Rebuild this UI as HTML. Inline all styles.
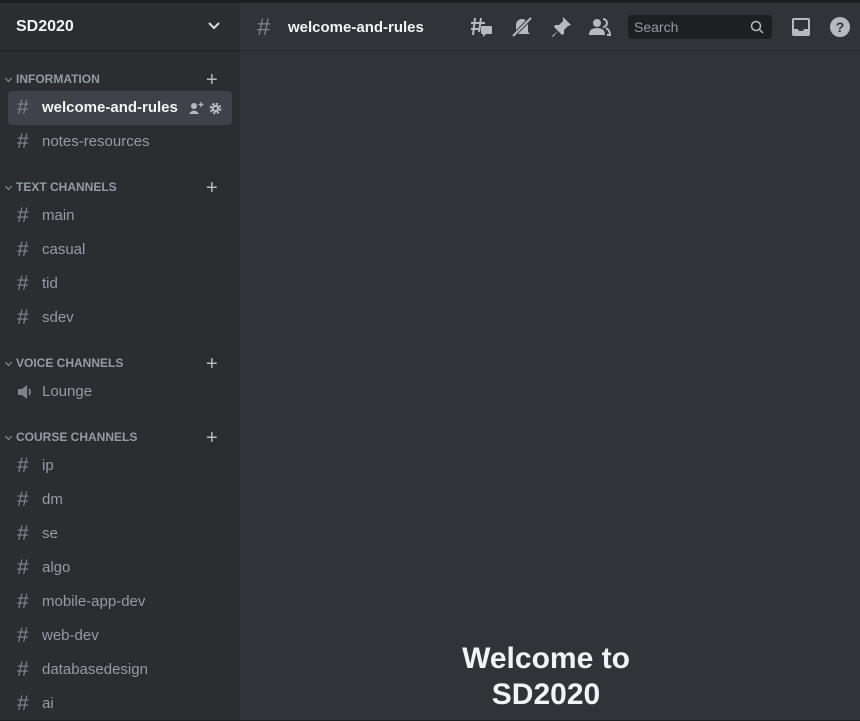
<!DOCTYPE html>
<html><head><style>
*{margin:0;padding:0;box-sizing:border-box}
body{width:860px;height:720px;overflow:hidden;background:#1e1f22;font-family:"Liberation Sans",sans-serif;position:relative}
#side{position:absolute;left:0;top:3px;width:240px;height:717px;background:#2b2d31}
#main{position:absolute;left:240px;top:3px;width:620px;height:717px;background:#313338}
.srv{position:absolute;left:0;top:0;width:240px;height:48px;border-bottom:1px solid #1f2023}
.srv b{position:absolute;left:16px;top:15px;color:#f2f3f5;font-size:16px}
.cat{position:absolute;left:16px;font-size:12px;font-weight:bold;color:#949ba4;letter-spacing:0}
.cat:before{content:"";position:absolute;left:-10px;top:4px;width:4px;height:4px;border-right:1px solid #949ba4;border-bottom:1px solid #949ba4;transform:rotate(45deg)}
.plus{position:absolute;left:206px;color:#b5bac1;font-size:20px;line-height:14px}
.ch{position:absolute;left:8px;width:224px;height:34px;border-radius:4px;color:#949ba4;font-size:15px;line-height:34px;padding-left:34px}
.ch i{position:absolute;left:9px;top:0;font-style:normal;font-size:21px;color:#80848e;font-weight:normal}
.sel{background:#404249;color:#f2f3f5;font-weight:bold}
.hdr{position:absolute;left:0;top:0;width:620px;height:48px;border-bottom:1px solid #26282c}
.ic{position:absolute;top:12px}
</style></head><body>
<div id="side">
<div class="srv"><b>SD2020</b>
<svg style="position:absolute;left:207px;top:18px" width="14" height="10"><path d="M2 2 L7 7 L12 2" stroke="#dbdee1" stroke-width="2" fill="none"/></svg></div>
<div class="cat" style="top:69px">INFORMATION</div><div class="plus" style="top:70px">+</div>
<div class="ch sel" style="top:88px"><i>#</i>welcome-and-rules
<svg style="position:absolute;left:180px;top:10px" width="16" height="14"><circle cx="6" cy="5" r="3" fill="#b5bac1"/><path d="M1 13 Q6 6 11 13Z" fill="#b5bac1"/><path d="M13 1v5M10.5 3.5h5" stroke="#b5bac1" stroke-width="1.3"/></svg>
<svg style="position:absolute;left:201px;top:11px" width="13" height="13" viewBox="0 0 13 13"><circle cx="6.5" cy="6.5" r="4.3" fill="none" stroke="#b5bac1" stroke-width="3" stroke-dasharray="2 1.4"/><circle cx="6.5" cy="6.5" r="3.5" fill="#b5bac1"/><circle cx="6.5" cy="6.5" r="1.5" fill="#404249"/></svg></div>
<div class="ch" style="top:122px"><i>#</i>notes-resources</div>
<div class="cat" style="top:177px">TEXT CHANNELS</div><div class="plus" style="top:178px">+</div>
<div class="ch" style="top:196px"><i>#</i>main</div>
<div class="ch" style="top:230px"><i>#</i>casual</div>
<div class="ch" style="top:264px"><i>#</i>tid</div>
<div class="ch" style="top:298px"><i>#</i>sdev</div>
<div class="cat" style="top:353px">VOICE CHANNELS</div><div class="plus" style="top:354px">+</div>
<div class="ch" style="top:372px"><svg style="position:absolute;left:9px;top:9px" width="18" height="16"><path d="M1 5h4l5-4v14l-5-4H1z" fill="#80848e"/><path d="M12 5q2 3 0 6" stroke="#80848e" stroke-width="1.8" fill="none"/></svg>Lounge</div>
<div class="cat" style="top:427px">COURSE CHANNELS</div><div class="plus" style="top:428px">+</div>
<div class="ch" style="top:446px"><i>#</i>ip</div>
<div class="ch" style="top:480px"><i>#</i>dm</div>
<div class="ch" style="top:514px"><i>#</i>se</div>
<div class="ch" style="top:548px"><i>#</i>algo</div>
<div class="ch" style="top:582px"><i>#</i>mobile-app-dev</div>
<div class="ch" style="top:616px"><i>#</i>web-dev</div>
<div class="ch" style="top:650px"><i>#</i>databasedesign</div>
<div class="ch" style="top:684px"><i>#</i>ai</div>
</div>
<div id="main">
<div class="hdr">
<span style="position:absolute;left:17px;top:11px;font-size:24px;color:#80848e">#</span>
<span style="position:absolute;left:48px;top:16px;font-size:15px;font-weight:bold;color:#f2f3f5">welcome-and-rules</span>
<svg class="ic" style="left:230px" width="24" height="24"><path d="M5 3l-2 17M11 3l-2 14M1 8h14M1 14h8" stroke="#b5bac1" stroke-width="2"/><rect x="11" y="11" width="11" height="8" rx="1" fill="#b5bac1"/><path d="M13 19v3l3-3z" fill="#b5bac1"/></svg>
<svg class="ic" style="left:270px" width="24" height="24"><path d="M6 17V10a6 6 0 0112 0v7l2 2H4z" fill="#b5bac1"/><path d="M3 21L21 3" stroke="#313338" stroke-width="4"/><path d="M3 21L21 3" stroke="#b5bac1" stroke-width="2"/></svg>
<svg class="ic" style="left:309px" width="24" height="24"><path d="M14 2l8 8-3 1-4 4 0 4-2 1-4-4-5 6-1-1 6-5-4-4 1-2 4 0 4-4z" fill="#b5bac1"/></svg>
<svg class="ic" style="left:348px" width="24" height="24"><circle cx="9" cy="8" r="4" fill="#b5bac1"/><path d="M1 20q0-7 8-7t8 7z" fill="#b5bac1"/><path d="M15 4a4 4 0 010 8M18 13q4 2 4 7h-3" fill="none" stroke="#b5bac1" stroke-width="2"/></svg>
<div style="position:absolute;left:388px;top:12px;width:144px;height:24px;background:#1e1f22;border-radius:4px">
<span style="position:absolute;left:6px;top:4px;font-size:14px;color:#949ba4">Search</span>
<svg style="position:absolute;left:122px;top:5px" width="14" height="14"><circle cx="6" cy="6" r="4.5" stroke="#b5bac1" stroke-width="1.5" fill="none"/><path d="M9.5 9.5L13 13" stroke="#b5bac1" stroke-width="1.5"/></svg></div>
<svg class="ic" style="left:549px" width="24" height="24"><rect x="3" y="3" width="18" height="18" rx="2" fill="#b5bac1"/><path d="M5 5h14v9h-4l-1 2h-4l-1-2H5z" fill="#313338"/></svg>
<svg class="ic" style="left:588px" width="24" height="24"><circle cx="12" cy="12" r="10" fill="#b5bac1"/><text x="12" y="17" text-anchor="middle" font-family="Liberation Sans" font-weight="bold" font-size="14" fill="#313338">?</text></svg>
</div>
<div style="position:absolute;left:0;width:612px;top:638px;text-align:center;color:#f2f3f5;font-weight:bold;font-size:30px;line-height:36px">Welcome to<br>SD2020</div>
</div>
</body></html>
